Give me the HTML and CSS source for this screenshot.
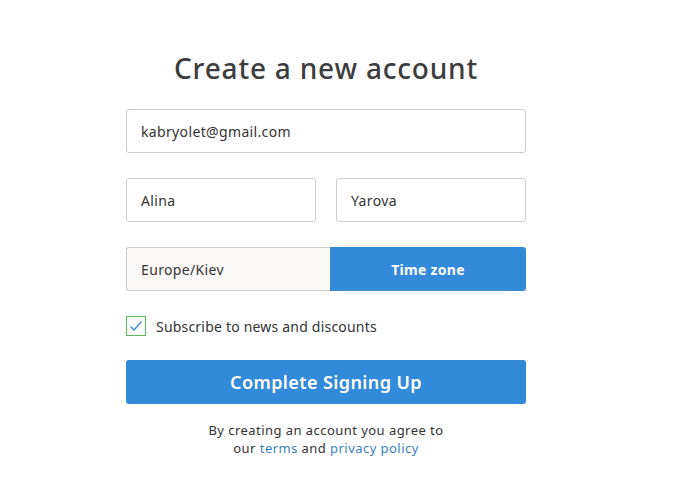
FILE: index.html
```html
<!DOCTYPE html>
<html lang="en">

<head>
    <meta charset="UTF-8">
    <meta name="viewport" content="width=device-width, initial-scale=1.0">
    <title>Create a new account</title>
    <link rel="stylesheet" href="styles.css">
</head>

<body>
    <div class="page">
        <form class="signup">
            <h1>Create a new account</h1>
            <input class="field" type="email" value="kabryolet@gmail.com">
            <div class="row">
                <input class="field" type="text" value="Alina">
                <input class="field" type="text" value="Yarova">
            </div>
            <div class="tz">
                <div class="tz-value">Europe/Kiev</div>
                <button type="button" class="tz-btn">Time zone</button>
            </div>
            <label class="check">
                <span class="box">
                    <svg width="14" height="12" viewBox="0 0 14 12"><path d="M1.5 6.5 L5 10 L12.5 1.5" fill="none" stroke="#3a8ad8" stroke-width="1.3"/></svg>
                </span>
                Subscribe to news and discounts
            </label>
            <button type="button" class="submit">Complete Signing Up</button>
            <p class="terms">By creating an account you agree to<br>our <a href="#">terms</a> and <a href="#">privacy policy</a></p>
        </form>
    </div>
</body></html>
```

FILE: styles.css
```css
body {
    margin: 0;
    background-color: #fff;
    font-family: "Noto Sans", "Liberation Sans", sans-serif;
    color: #333;
}

.page {
    width: 652px;
}

.signup {
    width: 400px;
    margin: 0 auto;
    padding-top: 47px;
    display: flex;
    flex-direction: column;
}

h1 {
    margin: 0 0 20px;
    font-size: 28px;
    font-weight: 500;
    letter-spacing: 0.8px;
    text-align: center;
    color: #3d3d3d;
    line-height: 42px;
}

.field {
    box-sizing: border-box;
    height: 44px;
    width: 100%;
    padding: 0 14px;
    border: 1px solid #ccc;
    border-radius: 3px;
    font-family: inherit;
    font-size: 14px;
    letter-spacing: 0.35px;
    color: #333;
    margin-bottom: 25px;
}

.row {
    display: flex;
    gap: 20px;
}

.tz {
    display: flex;
    height: 44px;
    margin-bottom: 25px;
}

.tz-value {
    box-sizing: border-box;
    width: 204px;
    padding: 0 14px;
    display: flex;
    align-items: center;
    border: 1px solid #ccc;
    border-right: none;
    border-radius: 3px 0 0 3px;
    background-color: #fbf9f7;
    font-size: 14px;
    letter-spacing: 0.35px;
}

.tz-btn {
    flex: 1;
    border: none;
    border-radius: 0 3px 3px 0;
    background-color: #338ad9;
    color: #fff;
    font-family: inherit;
    font-size: 14px;
    font-weight: 700;
    letter-spacing: 0.3px;
}

.check {
    display: flex;
    align-items: center;
    gap: 10px;
    font-size: 14px;
    letter-spacing: 0.2px;
    margin-bottom: 24px;
}

.box {
    box-sizing: border-box;
    width: 20px;
    height: 20px;
    border: 1px solid #5cb85c;
    display: flex;
    align-items: center;
    justify-content: center;
}

.submit {
    height: 44px;
    border: none;
    border-radius: 3px;
    background-color: #338ad9;
    color: #fff;
    font-family: inherit;
    font-size: 18px;
    font-weight: 600;
    letter-spacing: 0.4px;
}

.terms {
    margin: 17px 0 0;
    text-align: center;
    font-size: 13px;
    letter-spacing: 0.45px;
    line-height: 18px;
}

.terms a {
    color: #3a7fc0;
    text-decoration: none;
}
```
